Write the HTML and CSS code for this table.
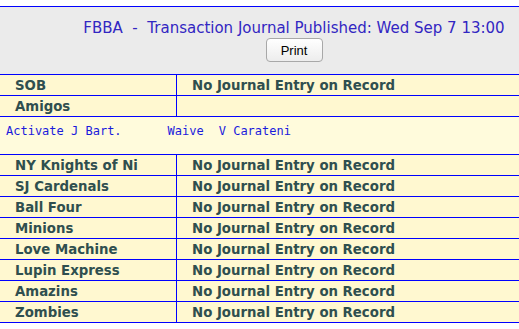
FILE: index.html
```html
<!DOCTYPE html>
<html>
<head>
<meta charset="utf-8">
<link rel="stylesheet" href="styles.css">
</head>
<body>
<div class="journal">
  <div class="header">
    <div class="title">FBBA&nbsp; - &nbsp;Transaction Journal Published: Wed Sep 7 13:00</div>
    <button class="print">Print</button>
  </div>
  <div class="row"><div class="team">SOB</div><div class="entry">No Journal Entry on Record</div></div>
  <div class="row"><div class="team">Amigos</div><div class="entry"></div></div>
  <div class="trans"><span class="t1">Activate J Bart.</span><span class="t2">Waive</span><span class="t3">V Carateni</span></div>
  <div class="row"><div class="team">NY Knights of Ni</div><div class="entry">No Journal Entry on Record</div></div>
  <div class="row"><div class="team">SJ Cardenals</div><div class="entry">No Journal Entry on Record</div></div>
  <div class="row"><div class="team">Ball Four</div><div class="entry">No Journal Entry on Record</div></div>
  <div class="row"><div class="team">Minions</div><div class="entry">No Journal Entry on Record</div></div>
  <div class="row"><div class="team">Love Machine</div><div class="entry">No Journal Entry on Record</div></div>
  <div class="row"><div class="team">Lupin Express</div><div class="entry">No Journal Entry on Record</div></div>
  <div class="row"><div class="team">Amazins</div><div class="entry">No Journal Entry on Record</div></div>
  <div class="row"><div class="team">Zombies</div><div class="entry">No Journal Entry on Record</div></div>
</div>
</body>
</html>
```
FILE: styles.css
```css
html, body {
  margin: 0;
  padding: 0;
  background: #ffffff;
  overflow: hidden;
}
.journal {
  width: 588px;
  margin-top: 6px;
  border-top: 1px solid #0000ff;
  font-family: "DejaVu Sans", Verdana, sans-serif;
}
.header {
  background: #ebebeb;
  height: 67px;
  border-bottom: 1px solid #0000ff;
  display: flex;
  flex-direction: column;
  align-items: center;
}
.title {
  margin-top: 11px;
  font-size: 15px;
  line-height: 20px;
  color: #3226c2;
  white-space: nowrap;
}
.print {
  margin-top: 0;
  width: 57px;
  height: 24px;
  border: 1px solid #a8a8a8;
  border-radius: 4px;
  background: linear-gradient(#ffffff, #ededed);
  font-family: "Liberation Sans", Arial, sans-serif;
  font-size: 13px;
  color: #000;
  padding: 0;
}
.row {
  display: grid;
  grid-template-columns: 177px 1fr;
  height: 20px;
  border-bottom: 1px solid #0000ff;
  background: #fff8d0;
  font-weight: bold;
  font-size: 13.3px;
  color: #2f4f4f;
}
.team, .entry {
  padding-left: 15px;
  padding-top: 1px;
  line-height: 20px;
  white-space: nowrap;
  overflow: visible;
  min-height: 0;
}
.team {
  border-right: 1px solid #0000ff;
}
.trans {
  height: 38px;
  border-bottom: 1px solid #0000ff;
  background: #fffbdc;
  font-family: "DejaVu Sans Mono", monospace;
  font-size: 12px;
  line-height: 14px;
  color: #1a1adc;
  padding-left: 6px;
  padding-top: 7px;
  box-sizing: border-box;
  display: flex;
  white-space: pre;
}
.t2 {
  margin-left: 46px;
}
.t3 {
  margin-left: 15px;
}
```
